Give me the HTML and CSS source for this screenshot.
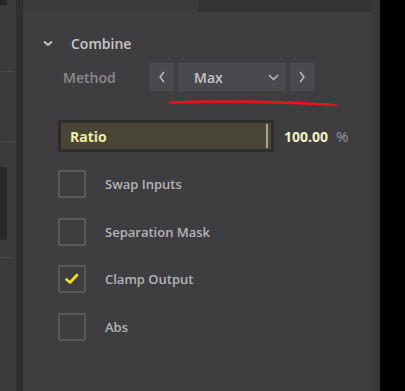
FILE: index.html
```html
<!DOCTYPE html>
<html lang="en">
<head>
    <meta charset="UTF-8">
    <title>Combine</title>
    <link rel="stylesheet" href="styles.css">
</head>
<body>
    <div class="window">
        <div class="side">
            <div class="side-top"></div>
            <div class="side-line l1"></div>
            <div class="side-line l2"></div>
            <div class="side-block"></div>
            <div class="side-line l3"></div>
        </div>
        <div class="divider"></div>
        <div class="panel">
            <div class="topbar"><div class="tab"></div></div>
            <div class="content">
                <div class="section-head">
                    <svg class="caret" width="10" height="7" viewBox="0 0 10 7"><path d="M1 1.5 L5 5 L9 1.5" fill="none" stroke="#c9c9c9" stroke-width="1.8"/></svg>
                    <span class="section-title">Combine</span>
                </div>

                <div class="method-row">
                    <span class="method-label">Method</span>
                    <div class="picker">
                        <button class="pick-btn left">
                            <svg width="8" height="12" viewBox="0 0 8 12"><path d="M6 1 L2 6 L6 11" fill="none" stroke="#bdbdbd" stroke-width="1.5"/></svg>
                        </button>
                        <button class="pick-main">
                            <span>Max</span>
                            <svg width="11" height="7" viewBox="0 0 11 7"><path d="M1 1 L5.5 5.5 L10 1" fill="none" stroke="#bdbdbd" stroke-width="1.5"/></svg>
                        </button>
                        <button class="pick-btn right">
                            <svg width="8" height="12" viewBox="0 0 8 12"><path d="M2 1 L6 6 L2 11" fill="none" stroke="#bdbdbd" stroke-width="1.5"/></svg>
                        </button>
                    </div>
                </div>

                <div class="slider-row">
                    <div class="slider">
                        <span class="slider-label">Ratio</span>
                        <div class="slider-handle"></div>
                    </div>
                    <span class="slider-value">100.00</span>
                    <span class="slider-unit">%</span>
                </div>

                <div class="checks">
                    <div class="check-row">
                        <div class="box"></div>
                        <span>Swap Inputs</span>
                    </div>
                    <div class="check-row">
                        <div class="box"></div>
                        <span>Separation Mask</span>
                    </div>
                    <div class="check-row">
                        <div class="box">
                            <svg width="14" height="12" viewBox="0 0 14 12"><path d="M1.5 6.5 L5 9.5 L12 2" fill="none" stroke="#f2e21e" stroke-width="2.6" stroke-linecap="round" stroke-linejoin="round"/></svg>
                        </div>
                        <span>Clamp Output</span>
                    </div>
                    <div class="check-row">
                        <div class="box"></div>
                        <span>Abs</span>
                    </div>
                </div>
            </div>
        </div>
        <div class="edge"></div>
        <svg class="scribble" width="405" height="391" viewBox="0 0 405 391">
            <path d="M170 102.5 Q 250 100 336 105" fill="none" stroke="#e8141c" stroke-width="2.6" stroke-linecap="round"/>
        </svg>
    </div>
</body>
</html>
```

FILE: styles.css
```css
body {
    margin: 0;
    background: #000;
    font-family: 'Open Sans', 'Noto Sans', sans-serif;
}
.window {
    position: relative;
    display: flex;
    width: 405px;
    height: 391px;
    overflow: hidden;
}
.side {
    position: relative;
    width: 16px;
    background: #3b3b3d;
}
.side-top {
    width: 7px;
    height: 5px;
    background: #262628;
}
.side-line {
    height: 1px;
    background: #49494b;
    margin-right: 1px;
}
.l1 { margin-top: 66px; }
.l2 { margin-top: 69px; }
.side-block {
    width: 7px;
    height: 73px;
    margin-top: 25px;
    background: #29292b;
    border-radius: 0 2px 2px 0;
}
.l3 { margin-top: 17px; }
.divider {
    width: 7px;
    background: #2f2f31;
}
.panel {
    width: 349px;
    background: #3e3d40;
    display: flex;
    flex-direction: column;
}
.topbar {
    height: 12px;
    background: #3b3b3d;
}
.tab {
    margin-left: 175px;
    height: 12px;
    background: #333335;
}
.content {
    padding: 21px 0 0 35px;
}
.section-head {
    display: flex;
    align-items: center;
    height: 20px;
}
.caret {
    margin-left: -15px;
}
.section-title {
    margin-left: 18px;
    color: #c8c8c8;
    font-size: 14px;
    font-weight: 600;
}
.method-row {
    display: flex;
    align-items: center;
    height: 30px;
    margin-top: 9px;
}
.method-label {
    margin-left: 5px;
    width: 86px;
    color: #8b8b8b;
    font-size: 14px;
    font-weight: 600;
}
.picker {
    display: flex;
    gap: 2px;
    height: 30px;
}
.picker button {
    display: flex;
    align-items: center;
    justify-content: center;
    height: 30px;
    padding: 0;
    border: 1px solid #444347;
    background: #4a494d;
    font-family: inherit;
}
.pick-btn {
    width: 26px;
}
.pick-btn.left {
    border-radius: 3px 0 0 3px;
}
.pick-btn.right {
    border-radius: 0 3px 3px 0;
}
.pick-main {
    width: 110px;
    justify-content: space-between !important;
    padding: 0 7px 0 16px !important;
    color: #c6c6c6;
    font-size: 14px;
    font-weight: 600;
}
.slider-row {
    display: flex;
    align-items: center;
    height: 32px;
    margin-top: 28px;
}
.slider {
    position: relative;
    box-sizing: border-box;
    width: 216px;
    height: 32px;
    border: 3px solid #2e2d2b;
    background: #4a4636;
    display: flex;
    align-items: center;
}
.slider-label {
    margin-left: 9px;
    color: #f3eba6;
    font-size: 14px;
    font-weight: bold;
}
.slider-handle {
    position: absolute;
    left: 205px;
    top: 1px;
    width: 2px;
    height: 24px;
    background: #a9a48c;
}
.slider-value {
    margin-left: 10px;
    color: #f1efc6;
    font-size: 14px;
    font-weight: bold;
}
.slider-unit {
    margin-left: 8px;
    color: #9a9a9a;
    font-size: 15px;
}
.checks {
    display: flex;
    flex-direction: column;
    gap: 19.5px;
    margin-top: 18px;
}
.check-row {
    display: flex;
    align-items: center;
    height: 28px;
}
.box {
    box-sizing: border-box;
    width: 28px;
    height: 28px;
    border: 2px solid #59595b;
    border-radius: 2px;
    display: flex;
    align-items: center;
    justify-content: center;
}
.check-row span {
    margin-left: 19px;
    color: #b4b4b4;
    font-size: 13px;
    font-weight: 600;
}
.edge {
    width: 8px;
    background: #38383a;
}
.scribble {
    position: absolute;
    left: 0;
    top: 0;
    pointer-events: none;
}
```
